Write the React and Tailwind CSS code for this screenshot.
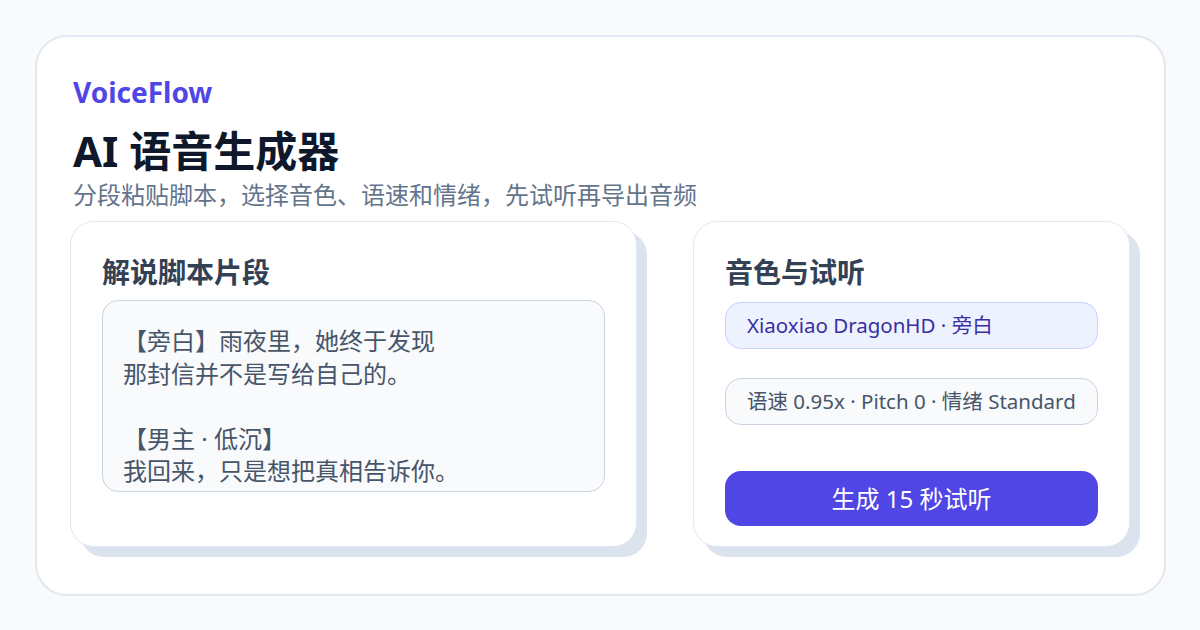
import React from 'react';

const font = 'font-["Noto_Sans","Noto_Sans_CJK_SC",sans-serif]';

const scriptLines = [
  '【旁白】雨夜里，她终于发现',
  '那封信并不是写给自己的。',
  '',
  '【男主 · 低沉】',
  '我回来，只是想把真相告诉你。',
];

const Panel = ({ title, className = '', children }) => (
  <div
    className={`flex flex-col rounded-[24px] border border-[#e2e8f0] bg-white px-[31px] pt-[32px] shadow-[10px_10px_0_#dbe3ef] ${className}`}
  >
    <h2 className="mb-[10px] text-[28px] font-bold leading-[36px] text-[#334155]">{title}</h2>
    {children}
  </div>
);

export default function App() {
  return (
    <div className={`h-[630px] w-[1200px] bg-[#f8fafc] pt-[35px] pl-[35px] ${font}`}>
      <div className="flex h-[561px] w-[1131px] flex-col rounded-[32px] border-2 border-[#e2e8f0] bg-white px-[33px] pt-[36px]">
        <div className="pl-[3px]">
          <div className="text-[28px] font-bold leading-[38px] text-[#4f46e5]">VoiceFlow</div>
          <h1 className="mt-[16px] text-[42px] font-bold leading-[48px] text-[#0f172a]">AI 语音生成器</h1>
          <p className="mt-[4px] text-[24px] leading-[32px] text-[#64748b]">
            分段粘贴脚本，选择音色、语速和情绪，先试听再导出音频
          </p>
        </div>

        <div className="mt-[10px] flex h-[326px] gap-[56px]">
          <Panel title="解说脚本片段" className="w-[567px]">
            <div className="h-[192px] overflow-hidden rounded-[16px] border border-[#cbd5e1] bg-[#f8fafc] px-[20px] pt-[24px]">
              {scriptLines.map((line, i) => (
                <div key={i} className="h-[32.5px] text-[24px] leading-[32.5px] text-[#475569]">
                  {line}
                </div>
              ))}
            </div>
          </Panel>

          <Panel title="音色与试听" className="w-[437px]">
            <div className="mt-[2px] flex h-[47px] items-center rounded-[16px] border border-[#c7d2fe] bg-[#eef2ff] px-[21px] text-[20.5px] text-[#3730a3]">
              Xiaoxiao DragonHD · 旁白
            </div>
            <div className="mt-[29px] flex h-[47px] items-center rounded-[16px] border border-[#cbd5e1] bg-[#f8fafc] px-[21px] text-[20.5px] text-[#475569]">
              语速 0.95x · Pitch 0 · 情绪 Standard
            </div>
            <button className="mt-[46px] flex h-[55px] items-center justify-center rounded-[16px] bg-[#4f46e5] text-[24px] text-white">
              生成 15 秒试听
            </button>
          </Panel>
        </div>
      </div>
    </div>
  );
}
